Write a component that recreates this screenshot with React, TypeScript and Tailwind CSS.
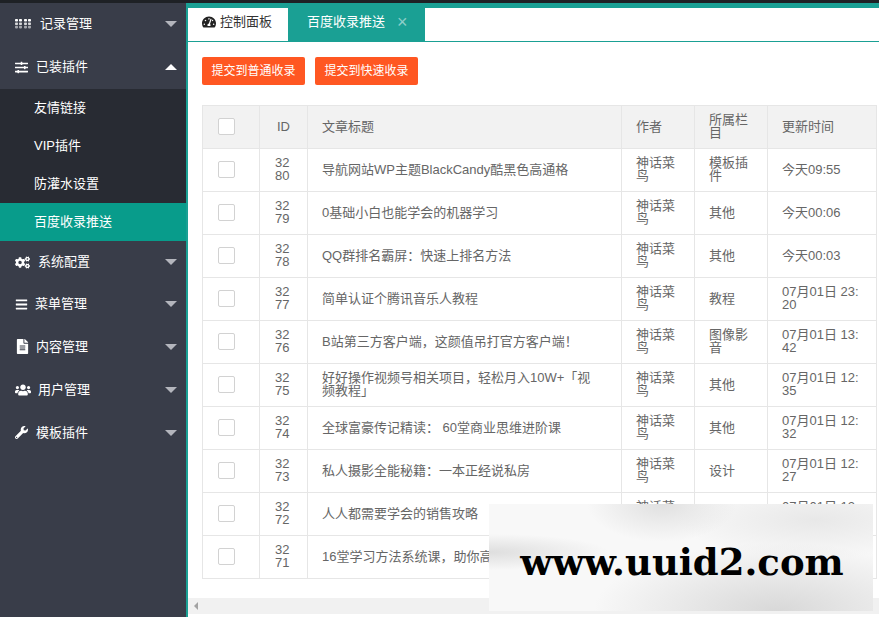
import { FaBars, FaCogs, FaFileAlt, FaSlidersH, FaTachometerAlt, FaUsers, FaWrench } from "react-icons/fa";
import type { ReactNode } from "react";

const FONT = "font-['Liberation_Sans','Noto_Sans_CJK_SC',sans-serif]";

function GridIcon() {
  const dots = [];
  for (const ox of [0, 9]) {
    for (let r = 0; r < 3; r++) {
      for (let c = 0; c < 2; c++) {
        dots.push(
          <rect key={`${ox}-${r}-${c}`} x={ox + c * 4} y={r * 3.4} width="3" height="2.6" rx="0.8" fill="#fff" opacity={r === 0 ? 1 : r === 1 ? 0.8 : 0.55} />,
        );
      }
    }
  }
  return (
    <svg width="16" height="10" viewBox="0 0 16 10">
      {dots}
    </svg>
  );
}

function Caret({ up }: { up?: boolean }) {
  return up ? (
    <span className="ml-auto mr-[9px] h-0 w-0 border-x-[6px] border-b-[6px] border-x-transparent border-b-white" />
  ) : (
    <span className="ml-auto mr-[9px] h-0 w-0 border-x-[6px] border-t-[6px] border-x-transparent border-t-[#b4b6bd]" />
  );
}

function NavItem({ icon, label, gap, height, up }: { icon: ReactNode; label: string; gap: string; height: string; up?: boolean }) {
  return (
    <div className={`flex items-center pl-[15px] text-[13px] text-white ${height}`}>
      <span className="flex h-4 items-center text-[15px]">{icon}</span>
      <span className={gap}>{label}</span>
      <Caret up={up} />
    </div>
  );
}

function Sidebar() {
  return (
    <aside className="w-[186px] shrink-0 bg-[#393d49]">
      <NavItem icon={<GridIcon />} label="记录管理" gap="ml-[9px]" height="h-[42px]" />
      <NavItem icon={<FaSlidersH className="text-[13px]" />} label="已装插件" gap="ml-2" height="h-[44px]" up />
      <div className="bg-[#282b33] text-[13px] text-white">
        <div className="flex h-[38px] items-center pl-[34px]">友情链接</div>
        <div className="flex h-[38px] items-center pl-[34px]">VIP插件</div>
        <div className="flex h-[38px] items-center pl-[34px]">防灌水设置</div>
        <div className="flex h-[38px] items-center bg-[#089c8b] pl-[34px]">百度收录推送</div>
      </div>
      <NavItem icon={<FaCogs />} label="系统配置" gap="ml-2" height="h-[42px]" />
      <NavItem icon={<FaBars className="text-[13px]" />} label="菜单管理" gap="ml-[7px]" height="h-[42px]" />
      <NavItem icon={<FaFileAlt />} label="内容管理" gap="ml-[6px]" height="h-[43px]" />
      <NavItem icon={<FaUsers className="text-[16px]" />} label="用户管理" gap="ml-[7px]" height="h-[43px]" />
      <NavItem icon={<FaWrench className="text-[13px]" />} label="模板插件" gap="ml-2" height="h-[43px]" />
    </aside>
  );
}

type Row = { id: string; title: string; cat: string; time: string };

const rows: Row[] = [
  { id: "3280", title: "导航网站WP主题BlackCandy酷黑色高通格", cat: "模板插件", time: "今天09:55" },
  { id: "3279", title: "0基础小白也能学会的机器学习", cat: "其他", time: "今天00:06" },
  { id: "3278", title: "QQ群排名霸屏：快速上排名方法", cat: "其他", time: "今天00:03" },
  { id: "3277", title: "简单认证个腾讯音乐人教程", cat: "教程", time: "07月01日 23:20" },
  { id: "3276", title: "B站第三方客户端，这颜值吊打官方客户端！", cat: "图像影音", time: "07月01日 13:42" },
  { id: "3275", title: "好好操作视频号相关项目，轻松月入10W+「视频教程」", cat: "其他", time: "07月01日 12:35" },
  { id: "3274", title: "全球富豪传记精读： 60堂商业思维进阶课", cat: "其他", time: "07月01日 12:32" },
  { id: "3273", title: "私人摄影全能秘籍：一本正经说私房", cat: "设计", time: "07月01日 12:27" },
  { id: "3272", title: "人人都需要学会的销售攻略", cat: "其他", time: "07月01日 12:20" },
  { id: "3271", title: "16堂学习方法系统课，助你高效学习", cat: "其他", time: "07月01日 12:10" },
];

function Check() {
  return <span className="block h-[17px] w-[17px] rounded-[2px] border border-[#d2d2d2] bg-white" />;
}

const cell = "border border-[#e6e6e6] pb-[2px] pl-[14px] pr-[14px] text-left align-middle font-normal break-all";
const idCell = "border border-[#e6e6e6] pb-[2px] pl-[15px] pr-[14px] text-left align-middle font-normal break-all";
const titleCell = "border border-[#e6e6e6] pb-[2px] pl-[14px] pr-[21px] text-left align-middle font-normal break-all";

function DataTable() {
  return (
    <table className="mt-5 w-[674px] table-fixed border-collapse text-[13px] leading-[13px] text-[#666]">
      <colgroup>
        <col className="w-[57px]" />
        <col className="w-[48px]" />
        <col className="w-[314px]" />
        <col className="w-[73px]" />
        <col className="w-[73px]" />
        <col className="w-[109px]" />
      </colgroup>
      <thead>
        <tr className="h-[43px] bg-[#f2f2f2]">
          <th className={idCell}><Check /></th>
          <th className={idCell}><span className="ml-[2px]">ID</span></th>
          <th className={titleCell}>文章标题</th>
          <th className={cell}>作者</th>
          <th className={cell}>所属栏目</th>
          <th className={cell}>更新时间</th>
        </tr>
      </thead>
      <tbody>
        {rows.map((r) => (
          <tr key={r.id} className="h-[43px]">
            <td className={idCell}><Check /></td>
            <td className={idCell}>{r.id}</td>
            <td className={titleCell}>{r.title}</td>
            <td className={cell}>神话菜鸟</td>
            <td className={cell}>{r.cat}</td>
            <td className={cell}>{r.time}</td>
          </tr>
        ))}
      </tbody>
    </table>
  );
}

function Watermark() {
  return (
    <div className="absolute left-[489px] top-[504px] flex h-[107px] w-[384px] items-center justify-center bg-[radial-gradient(ellipse_at_75%_100%,#d8d8d8_0%,transparent_45%),radial-gradient(ellipse_at_0%_45%,#dedede_0%,transparent_22%),radial-gradient(ellipse_at_45%_0%,#e0e0e0_0%,transparent_25%),radial-gradient(ellipse_at_85%_15%,#e8e8e8_0%,transparent_30%),linear-gradient(#f8f8f8,#f8f8f8)] pl-[2px] pt-[10px]">
      <span className="font-['DejaVu_Serif',serif] text-[37px] font-bold leading-none text-black">www.uuid2.com</span>
    </div>
  );
}

export default function App() {
  return (
    <div className={`relative flex h-screen w-full flex-col overflow-hidden bg-white ${FONT}`}>
      <div className="h-[3px] shrink-0 bg-[#1e2125]" />
      <div className="flex min-h-0 flex-1">
        <Sidebar />
        <main className="flex min-w-0 flex-1 flex-col border-l-2 border-[#1aa094]">
          <div className="h-[5px] shrink-0 bg-[#1aa094]" />
          <div className="flex h-[34px] shrink-0 border-b border-[#1aa094]">
            <div className="flex w-[100px] items-center pb-[6px] pl-[14px] text-[13px] text-[#333]">
              <FaTachometerAlt className="text-[14px] text-[#222]" />
              <span className="ml-1">控制面板</span>
            </div>
            <div className="flex w-[137px] items-center bg-[#1aa094] pb-[6px] pl-[19px] text-[13px] text-white">
              <span>百度收录推送</span>
              <span className="ml-3 text-lg leading-none text-white/50">×</span>
            </div>
          </div>
          <div className="min-h-0 flex-1 pl-[14px] pt-[15px]">
            <div className="flex gap-[10px]">
              <button className="h-[28px] w-[103px] rounded-[2px] bg-[#ff5722] text-xs text-white">提交到普通收录</button>
              <button className="h-[28px] w-[103px] rounded-[2px] bg-[#ff5722] text-xs text-white">提交到快速收录</button>
            </div>
            <DataTable />
          </div>
          <div className="mb-[3px] flex h-[16px] shrink-0 items-center bg-[#f1f1f1] pl-[6px]">
            <span className="h-0 w-0 border-y-[4px] border-r-[4px] border-y-transparent border-r-[#a3a3a3]" />
          </div>
        </main>
      </div>
      <Watermark />
    </div>
  );
}
